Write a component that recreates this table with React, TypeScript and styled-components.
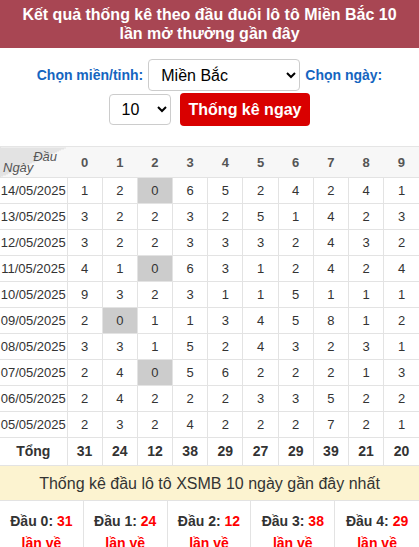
import React from "react";
import styled, { createGlobalStyle } from "styled-components";

const Global = createGlobalStyle`
  html, body { margin: 0; padding: 0; background: #fff; }
  body { font-family: "Liberation Sans", Arial, sans-serif; color: #333; }
  * { box-sizing: border-box; }
`;

const Page = styled.div`
  width: 419px;
`;

const Title = styled.h1`
  margin: 0;
  background: #a84653;
  color: #fff;
  font-size: 16px;
  font-weight: bold;
  line-height: 19px;
  text-align: center;
  padding: 5px 12px;
`;

const Form = styled.div`
  display: flex;
  flex-wrap: wrap;
  justify-content: center;
  align-items: center;
  column-gap: 5px;
  row-gap: 2px;
  padding: 11px 10px 20px;
`;

const Label = styled.label`
  color: #1565c0;
  font-weight: bold;
  font-size: 14px;
`;

const Select = styled.select<{ $w: number; $h: number }>`
  width: ${(p) => p.$w}px;
  height: ${(p) => p.$h}px;
  font-family: "Liberation Sans", Arial, sans-serif;
  font-size: 16px;
  color: #000;
  background: #fff;
  border: 1px solid #ccc;
  border-radius: 4px;
  padding: 0 8px;
`;

const Button = styled.button`
  margin-left: 4px;
  height: 33px;
  padding: 0 9px;
  background: #d90000;
  color: #fff;
  border: none;
  border-radius: 4px;
  font-family: "Liberation Sans", Arial, sans-serif;
  font-weight: bold;
  font-size: 16px;
`;

const Table = styled.table`
  width: 419px;
  border-collapse: collapse;
  table-layout: fixed;
  font-size: 13px;
  color: #333;
`;

const HeadRow = styled.tr`
  height: 31px;
  background: #f7f7f7;
  border-top: 1px solid #e5e5e5;
`;

const Corner = styled.th`
  position: relative;
  padding: 0;
  background: linear-gradient(to bottom right, #e3e3e3 50%, #f7f7f7 50%);
  font-weight: normal;
  font-style: italic;
  color: #555;
  font-size: 13px;
`;

const CornerTop = styled.span`
  position: absolute;
  top: 2px;
  right: 10px;
`;

const CornerBottom = styled.span`
  position: absolute;
  bottom: 2px;
  left: 3px;
`;

const HeadCell = styled.th`
  padding: 0;
  font-weight: bold;
  color: #555;
  font-size: 13px;
`;

const Row = styled.tr<{ $total?: boolean }>`
  height: ${(p) => (p.$total ? 27 : 26)}px;
`;

const DateCell = styled.td`
  padding: 0;
  text-align: center;
  border-top: 1px solid #e3e3e3;
  border-right: 1px solid #e3e3e3;
  white-space: nowrap;
`;

const NumCell = styled.td<{ $zero?: boolean; $bold?: boolean }>`
  padding: 0;
  text-align: center;
  border: 1px solid #e3e3e3;
  border-bottom: none;
  background: ${(p) => (p.$zero ? "#cccccc" : "transparent")};
  font-weight: ${(p) => (p.$bold ? "bold" : "normal")};
  font-size: ${(p) => (p.$bold ? "14px" : "13px")};
  &:last-child { border-right: none; }
`;

const TotalLabel = styled.td`
  padding: 0;
  text-align: center;
  font-weight: bold;
  font-size: 14px;
  border-top: 1px solid #e3e3e3;
  border-right: 1px solid #e3e3e3;
`;

const Banner = styled.div`
  background: #fcf3d0;
  color: #333;
  font-size: 16px;
  text-align: center;
  height: 35px;
  line-height: 35px;
  border-top: 1px solid #e3e3e3;
`;

const Summary = styled.div`
  display: grid;
  grid-template-columns: repeat(5, 1fr);
  border-top: 1px solid #e3e3e3;
`;

const SumCell = styled.div`
  text-align: center;
  padding-top: 9px;
  padding-bottom: 6px;
  border-right: 1px solid #e3e3e3;
  border-bottom: 1px solid #e3e3e3;
  font-weight: bold;
  font-size: 14px;
  line-height: 22px;
  &:nth-child(5n) { border-right: none; }
`;

const Red = styled.span`
  color: #f00;
`;

const RedLine = styled.div`
  color: #f00;
`;

const data: [string, number[]][] = [
  ["14/05/2025", [1, 2, 0, 6, 5, 2, 4, 2, 4, 1]],
  ["13/05/2025", [3, 2, 2, 3, 2, 5, 1, 4, 2, 3]],
  ["12/05/2025", [3, 2, 2, 3, 3, 3, 2, 4, 3, 2]],
  ["11/05/2025", [4, 1, 0, 6, 3, 1, 2, 4, 2, 4]],
  ["10/05/2025", [9, 3, 2, 3, 1, 1, 5, 1, 1, 1]],
  ["09/05/2025", [2, 0, 1, 1, 3, 4, 5, 8, 1, 2]],
  ["08/05/2025", [3, 3, 1, 5, 2, 4, 3, 2, 3, 1]],
  ["07/05/2025", [2, 4, 0, 5, 6, 2, 2, 2, 1, 3]],
  ["06/05/2025", [2, 4, 2, 2, 2, 3, 3, 5, 2, 2]],
  ["05/05/2025", [2, 3, 2, 4, 2, 2, 2, 7, 2, 1]],
];

const digits = [0, 1, 2, 3, 4, 5, 6, 7, 8, 9];
const totals = digits.map((d) => data.reduce((s, [, r]) => s + r[d], 0));

export default function App() {
  return (
    <Page>
      <Global />
      <Title>Kết quả thống kê theo đầu đuôi lô tô Miền Bắc 10 lần mở thưởng gần đây</Title>
      <Form>
        <Label>Chọn miền/tỉnh:</Label>
        <Select $w={152} $h={32} defaultValue="mb">
          <option value="mb">Miền Bắc</option>
        </Select>
        <Label>Chọn ngày:</Label>
        <Select $w={62} $h={31} defaultValue="10">
          <option value="10">10</option>
        </Select>
        <Button>Thống kê ngay</Button>
      </Form>
      <Table>
        <colgroup>
          <col style={{ width: 67 }} />
          {digits.map((d) => (
            <col key={d} />
          ))}
        </colgroup>
        <thead>
          <HeadRow>
            <Corner>
              <CornerTop>Đầu</CornerTop>
              <CornerBottom>Ngày</CornerBottom>
            </Corner>
            {digits.map((d) => (
              <HeadCell key={d}>{d}</HeadCell>
            ))}
          </HeadRow>
        </thead>
        <tbody>
          {data.map(([date, row]) => (
            <Row key={date}>
              <DateCell>{date}</DateCell>
              {row.map((v, i) => (
                <NumCell key={i} $zero={v === 0}>
                  {v}
                </NumCell>
              ))}
            </Row>
          ))}
          <Row $total>
            <TotalLabel>Tổng</TotalLabel>
            {totals.map((t, i) => (
              <NumCell key={i} $bold>
                {t}
              </NumCell>
            ))}
          </Row>
        </tbody>
      </Table>
      <Banner>Thống kê đầu lô tô XSMB 10 ngày gần đây nhất</Banner>
      <Summary>
        {totals.map((t, i) => (
          <SumCell key={i}>
            <div>
              Đầu {i}: <Red>{t}</Red>
            </div>
            <RedLine>lần về</RedLine>
          </SumCell>
        ))}
      </Summary>
    </Page>
  );
}
